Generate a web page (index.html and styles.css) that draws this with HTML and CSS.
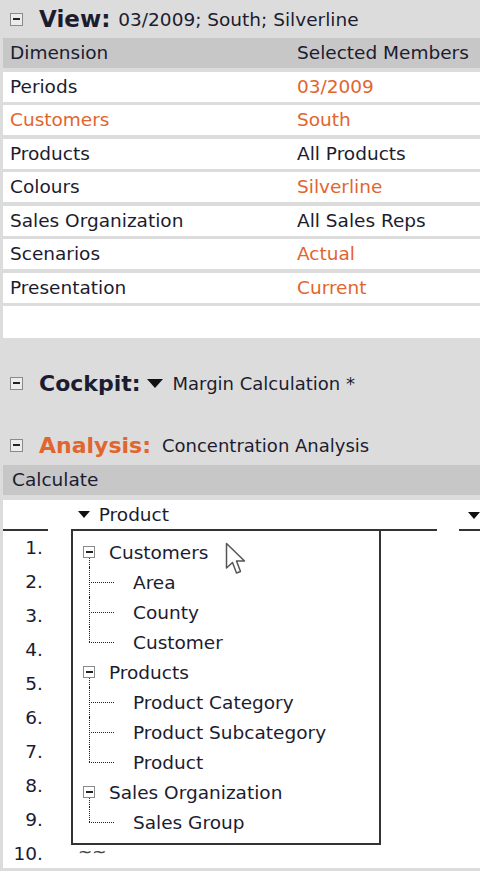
FILE: index.html
```html
<!DOCTYPE html>
<html lang="en">
<head>
    <meta charset="UTF-8">
    <meta name="viewport" content="width=device-width, initial-scale=1.0">
    <title>Concentration Analysis</title>
    <link rel="stylesheet" href="styles.css">
</head>
<body>
    <!-- View -->
    <div class="section-head">
        <span class="toggle"></span>
        <span class="head-title view-title">View:</span>
        <span class="head-note view-note">03/2009; South; Silverline</span>
    </div>
    <div class="dim-table">
        <div class="dim-row head"><span>Dimension</span><span>Selected Members</span></div>
        <div class="dim-row"><span>Periods</span><span class="hl">03/2009</span></div>
        <div class="dim-row"><span class="hl">Customers</span><span class="hl">South</span></div>
        <div class="dim-row"><span>Products</span><span>All Products</span></div>
        <div class="dim-row"><span>Colours</span><span class="hl">Silverline</span></div>
        <div class="dim-row"><span>Sales Organization</span><span>All Sales Reps</span></div>
        <div class="dim-row"><span>Scenarios</span><span class="hl">Actual</span></div>
        <div class="dim-row"><span>Presentation</span><span class="hl">Current</span></div>
        <div class="dim-row blank"></div>
    </div>

    <!-- Cockpit -->
    <div class="section-head spaced">
        <span class="toggle"></span>
        <span class="head-title">Cockpit:</span>
        <svg class="drop-arrow big" width="16" height="9" viewBox="0 0 16 9"><polygon points="0,0 16,0 8,9" fill="#111"/></svg>
        <span class="head-note">Margin Calculation *</span>
    </div>

    <!-- Analysis -->
    <div class="section-head spaced">
        <span class="toggle"></span>
        <span class="head-title hl">Analysis:</span>
        <span class="head-note">Concentration Analysis</span>
    </div>
    <div class="bar">Calculate</div>

    <div class="result">
        <div class="col-head">
            <div class="col-cell col-num"></div>
            <div class="col-cell col-main">
                <svg class="drop-arrow" width="12" height="7" viewBox="0 0 12 7"><polygon points="0,0 12,0 6,7" fill="#111"/></svg>
                <span>Product</span>
            </div>
            <div class="col-cell col-end">
                <svg class="drop-arrow" width="12" height="7" viewBox="0 0 12 7"><polygon points="0,0 12,0 6,7" fill="#111"/></svg>
            </div>
        </div>

        <ol class="rank-list">
            <li class="rank-row"><span class="rank-no">1.</span><span></span></li>
            <li class="rank-row"><span class="rank-no">2.</span><span></span></li>
            <li class="rank-row"><span class="rank-no">3.</span><span></span></li>
            <li class="rank-row"><span class="rank-no">4.</span><span></span></li>
            <li class="rank-row"><span class="rank-no">5.</span><span></span></li>
            <li class="rank-row"><span class="rank-no">6.</span><span></span></li>
            <li class="rank-row"><span class="rank-no">7.</span><span></span></li>
            <li class="rank-row"><span class="rank-no">8.</span><span></span></li>
            <li class="rank-row"><span class="rank-no">9.</span><span></span></li>
            <li class="rank-row"><span class="rank-no">10.</span><span class="tilde">~~</span></li>
        </ol>

        <!-- dimension picker popup -->
        <div class="dropdown">
            <ul class="tree">
                <li class="tree-item group"><span class="toggle small"></span>Customers</li>
                <li class="tree-item child">Area</li>
                <li class="tree-item child">County</li>
                <li class="tree-item child last">Customer</li>
                <li class="tree-item group"><span class="toggle small"></span>Products</li>
                <li class="tree-item child">Product Category</li>
                <li class="tree-item child">Product Subcategory</li>
                <li class="tree-item child last">Product</li>
                <li class="tree-item group"><span class="toggle small"></span>Sales Organization</li>
                <li class="tree-item child last">Sales Group</li>
            </ul>
        </div>

        <svg class="cursor" width="22" height="34" viewBox="0 0 22 34">
            <path d="M1.5 1.5 L1.5 26 L7.5 20.5 L11.5 31 L15.5 29.5 L11.5 19 L19.5 19 Z" fill="#fff" stroke="#555" stroke-width="1.5" stroke-linejoin="round"/>
        </svg>
    </div>
</body>
</html>
```

FILE: styles.css
```css
body {
    margin: 0;
    background: #dcdcdc;
    font-family: "DejaVu Sans", Verdana, sans-serif;
    font-size: 18.5px;
    color: #1c1c30;
}
.hl {
    color: #e2652e;
}

/* section headers */
.section-head {
    display: flex;
    align-items: center;
    height: 38px;
    padding-left: 10px;
    white-space: nowrap;
}
.section-head.spaced {
    margin-top: 28px;
    height: 34px;
}
.toggle {
    display: flex;
    align-items: center;
    justify-content: center;
    flex: none;
    width: 11px;
    height: 11px;
    border: 1.5px solid #8a8a8a;
    background: #ececec;
    margin-right: 16px;
}
.toggle::before {
    content: "";
    width: 7px;
    height: 2px;
    background: #222;
}
.head-title {
    font-weight: bold;
    font-size: 22px;
    margin-right: 9px;
}
.view-title {
    font-size: 23px;
    margin-right: 8px;
}
.head-title.hl {
    margin-right: 11px;
}
.head-note {
    font-size: 18px;
}
.view-note {
    font-size: 18.5px;
}
.drop-arrow.big {
    margin: 0 10px 0 -3px;
}

/* dimension table */
.dim-table {
    margin-left: 3px;
}
.dim-row {
    display: grid;
    grid-template-columns: 287px 1fr;
    height: 30px;
    line-height: 30px;
    padding-left: 7px;
    margin-top: 3.5px;
    background: #fff;
    white-space: nowrap;
    overflow: hidden;
}
.dim-row.head {
    margin-top: 0;
    background: #c7c7c7;
}
.dim-row.blank {
    height: 32px;
}

.bar {
    margin: 3px 0 0 3px;
    height: 30px;
    line-height: 30px;
    padding-left: 9px;
    background: #c7c7c7;
}

/* result area */
.result {
    position: relative;
    margin: 5px 0 0 3px;
    height: 368px;
    background: #fff;
    overflow: hidden;
}
.col-head {
    display: flex;
    height: 31px;
}
.col-cell {
    display: flex;
    align-items: center;
    border-bottom: 2px solid #333;
}
.col-num {
    width: 45px;
    margin-right: 23px;
}
.col-main {
    width: 361px;
    padding-left: 7px;
    margin-right: 22px;
}
.col-main .drop-arrow {
    margin-right: 9px;
}
.col-end {
    flex: 1;
    padding-left: 9px;
    align-items: flex-start;
    padding-top: 12px;
}

.rank-list {
    list-style: none;
    margin: 0;
    padding: 0;
}
.rank-row {
    display: grid;
    grid-template-columns: 40px 1fr;
    column-gap: 35px;
    height: 34px;
    line-height: 34px;
}
.rank-no {
    text-align: right;
}
.tilde {
    color: #444;
    font-size: 17px;
    line-height: 30px;
}

/* popup tree */
.dropdown {
    position: absolute;
    left: 68px;
    top: 29px;
    width: 306px;
    padding: 6px 0;
    border: 2px solid #333;
    background: #fff;
}
.tree {
    list-style: none;
    margin: 0;
    padding: 0;
}
.tree-item {
    position: relative;
    display: flex;
    align-items: center;
    height: 30px;
    white-space: nowrap;
}
.tree-item.group {
    padding-left: 10px;
}
.toggle.small {
    width: 10px;
    height: 10px;
    margin-right: 14px;
    background: #fff;
}
.tree-item.group::after {
    content: "";
    position: absolute;
    left: 16px;
    top: 21px;
    height: 9px;
    border-left: 1px dotted #222;
}
.tree-item.child {
    padding-left: 60px;
}
.tree-item.child::before {
    content: "";
    position: absolute;
    left: 16px;
    top: 0;
    height: 100%;
    border-left: 1px dotted #222;
}
.tree-item.child.last::before {
    height: 50%;
}
.tree-item.child::after {
    content: "";
    position: absolute;
    left: 16px;
    top: 50%;
    width: 25px;
    border-top: 1px dotted #222;
}

.cursor {
    position: absolute;
    left: 222px;
    top: 42px;
}
```
